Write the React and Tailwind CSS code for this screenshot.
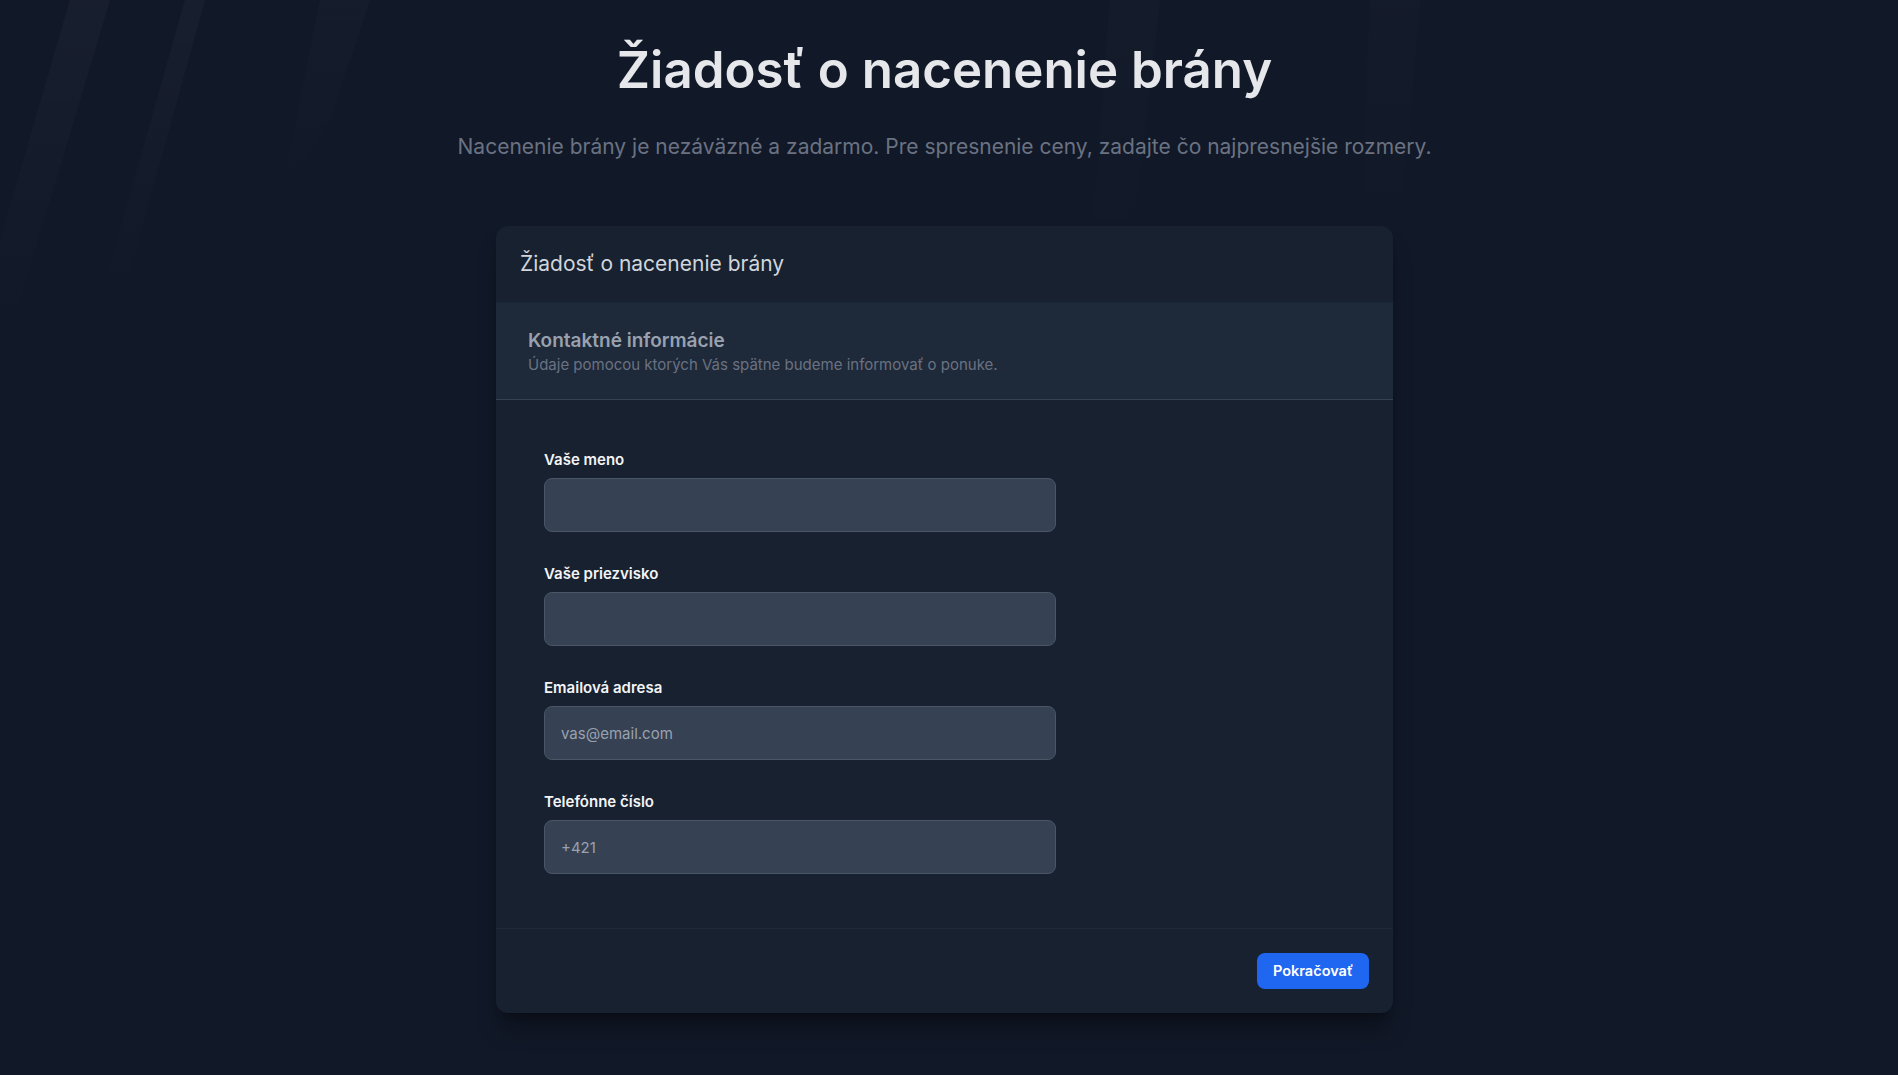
import React from 'react';

const fields = [
  { id: 'meno', label: 'Vaše meno', type: 'text', placeholder: '' },
  { id: 'priezvisko', label: 'Vaše priezvisko', type: 'text', placeholder: '' },
  { id: 'email', label: 'Emailová adresa', type: 'email', placeholder: 'vas@email.com' },
  { id: 'telefon', label: 'Telefónne číslo', type: 'tel', placeholder: '+421' },
];

// jemné diagonálne pruhy na pozadí
function Streaks() {
  return (
    <svg className="pointer-events-none absolute inset-0 h-full w-full" viewBox="0 0 1898 1075" preserveAspectRatio="none">
      <defs>
        <linearGradient id="fade" x1="0" y1="0" x2="0" y2="1">
          <stop offset="0" stopColor="#ffffff" stopOpacity="0.028" />
          <stop offset="1" stopColor="#ffffff" stopOpacity="0" />
        </linearGradient>
      </defs>
      <polygon points="70,0 110,0 20,300 0,330 0,240" fill="url(#fade)" />
      <polygon points="185,0 205,0 130,270 100,300" fill="url(#fade)" />
      <polygon points="320,0 370,0 330,120 280,200" fill="url(#fade)" opacity="0.6" />
      <polygon points="1110,0 1160,0 1130,260 1090,260" fill="url(#fade)" opacity="0.5" />
      <polygon points="1370,0 1420,0 1400,240 1360,240" fill="url(#fade)" opacity="0.4" />
    </svg>
  );
}

export default function App() {
  return (
    <div className="relative min-h-screen overflow-hidden bg-[#111827] pr-[9px] font-['Inter',sans-serif]">
      <Streaks />
      <div className="relative flex flex-col items-center pt-11 pb-16">
        <h1 className="text-[51px] leading-none font-semibold text-gray-200">Žiadosť o nacenenie brány</h1>
        <p className="mt-[38px] text-[21px] leading-7 text-gray-500">
          Nacenenie brány je nezáväzné a zadarmo. Pre spresnenie ceny, zadajte čo najpresnejšie rozmery.
        </p>

        <div className="mt-[65px] w-full max-w-[897px] overflow-hidden rounded-xl bg-gray-800/50 shadow-xl shadow-black/30">
          <div className="border-b border-gray-800/70 px-6 py-6">
            <h2 className="text-[21px] leading-7 text-gray-300">Žiadosť o nacenenie brány</h2>
          </div>

          <div className="border-b border-gray-700 bg-gray-800 px-8 py-6">
            <h3 className="text-[19px] leading-7 font-semibold text-gray-400">Kontaktné informácie</h3>
            <p className="text-[15px] leading-5 text-gray-500">Údaje pomocou ktorých Vás spätne budeme informovať o ponuke.</p>
          </div>

          <div className="flex flex-col gap-8 px-12 pt-[50px] pb-[54px]">
            {fields.map((f) => (
              <div key={f.id} className="flex flex-col gap-2">
                <label htmlFor={f.id} className="text-[15px] leading-5 font-semibold text-gray-100">
                  {f.label}
                </label>
                <input
                  id={f.id}
                  type={f.type}
                  placeholder={f.placeholder}
                  className="h-[54px] w-full max-w-lg rounded-lg border border-gray-600 bg-gray-700 px-4 text-[15px] text-gray-100 placeholder:text-gray-400 outline-none"
                />
              </div>
            ))}
          </div>

          <div className="flex justify-end border-t border-gray-800 px-6 py-6">
            <button className="h-9 rounded-lg bg-[#1f66f0] px-4 text-[14.5px] font-semibold text-white">Pokračovať</button>
          </div>
        </div>
      </div>
    </div>
  );
}
